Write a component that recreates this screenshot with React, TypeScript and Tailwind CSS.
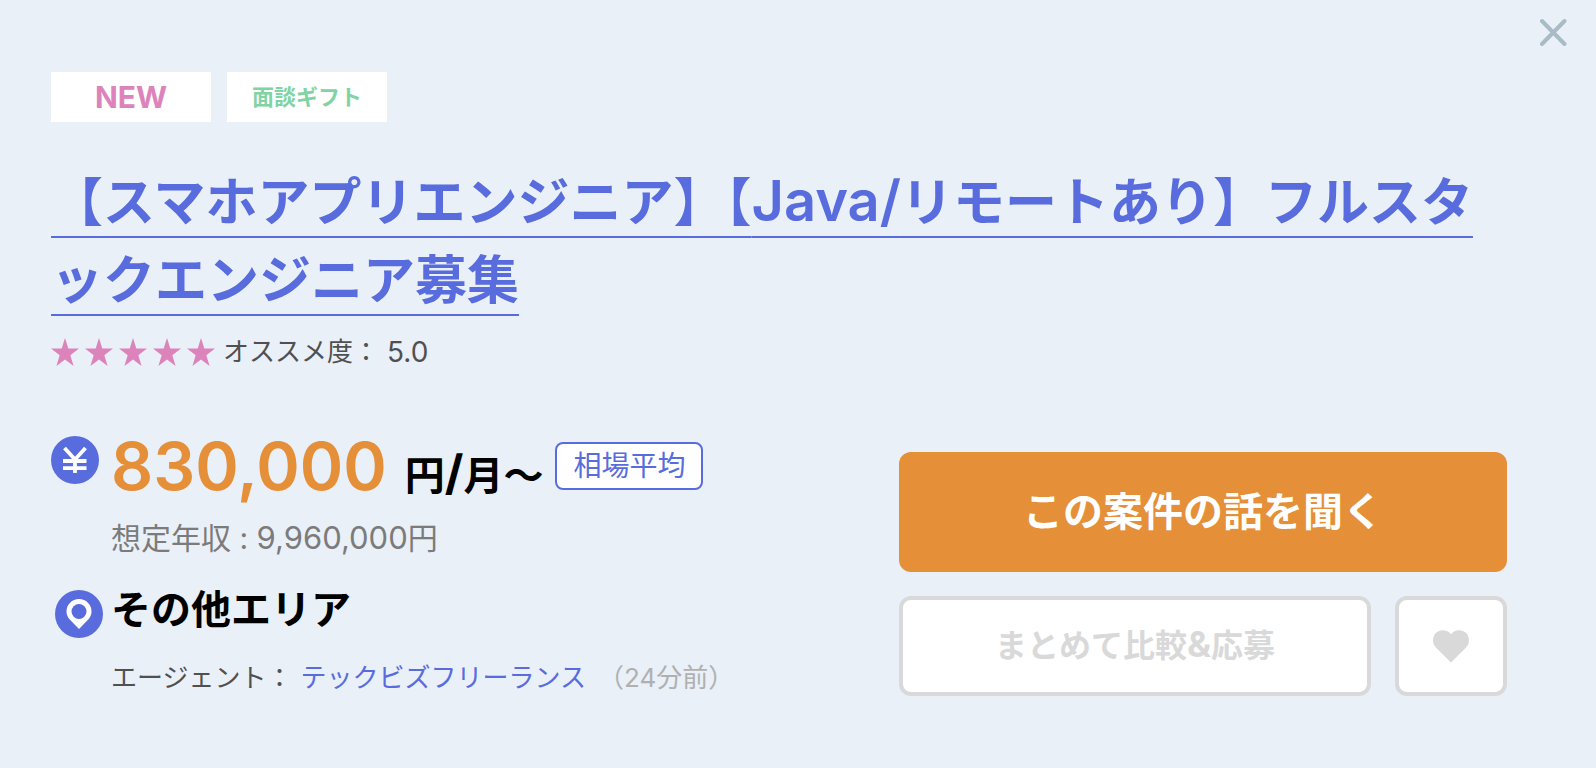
import type { ReactNode } from "react";

const job = {
  rating: "5.0",
  price: "830,000",
  yearly: "9,960,000",
  area: "その他エリア",
  agent: "テックビズフリーランス",
  updated: "（24分前）",
};

const tags = [
  { label: "NEW", className: "text-[30px] font-bold text-[#dd83bb]" },
  { label: "面談ギフト", className: "text-[22px] font-bold text-[#80d3a3]" },
];

// Latin runs are set a little larger than the kana around them
function Latin({ size, children }: { size: string; children: ReactNode }) {
  return <span className={`leading-none ${size}`}>{children}</span>;
}

function CloseIcon() {
  return (
    <svg width="28" height="28" viewBox="0 0 28 28" fill="none" stroke="#a9bbc5" strokeWidth="4" strokeLinecap="round">
      <path d="M3 3l22.500 23M25.500 3L3 26" />
    </svg>
  );
}

function YenIcon() {
  return (
    <svg className="shrink-0" width="48" height="48" viewBox="0 0 48 48">
      <circle cx="24" cy="24" r="24" fill="#586cde" />
      <path d="M13.500 12L24 23.500 34.500 12M24 23v14M12 25h23.500M12 32.200h23.500" fill="none" stroke="#fff" strokeWidth="3.800" />
    </svg>
  );
}

function PinIcon() {
  return (
    <svg className="shrink-0" width="48" height="48" viewBox="0 0 48 48">
      <circle cx="24" cy="24" r="24" fill="#586cde" />
      <path
        d="M24 9C17 9 11.500 14.500 11.500 21.500c0 3.500 1.300 6 3.500 8.300L24 39l9-9.200c2.200-2.300 3.500-4.800 3.500-8.300C36.500 14.500 31 9 24 9z"
        fill="#fff"
      />
      <circle cx="24" cy="21.500" r="7.500" fill="#586cde" />
    </svg>
  );
}

function HeartIcon() {
  return (
    <svg width="36" height="33" viewBox="0 0 36 33" fill="#d9d9d9">
      <path d="M18 32.500L3.200 17.800C1 15.600 0 13.200 0 10.300 0 4.600 4.400.3 9.800.3c3.300 0 6.300 1.500 8.200 4 1.900-2.500 4.900-4 8.200-4 5.400 0 9.800 4.300 9.800 10 0 2.900-1 5.300-3.200 7.500z" />
    </svg>
  );
}

function Rating() {
  return (
    <div className="mt-3 flex items-center text-[26px] leading-10 text-[#505050]">
      <div className="mr-2 flex gap-[6px]">
        {[1, 2, 3, 4, 5].map((n) => (
          <svg key={n} width="28" height="28" viewBox="0 0 28 28" fill="#dd83bb">
            <path d="M14 0l3.300 10.600H28l-8.700 6.600L22.600 28 14 21.400 5.400 28l3.300-10.800L0 10.600h10.700z" />
          </svg>
        ))}
      </div>
      <span>オススメ度：</span>
      <span className="ml-2 text-[28px]">{job.rating}</span>
    </div>
  );
}

export default function App() {
  return (
    <main
      lang="ja"
      className="min-h-screen bg-[#e9f0f8] pb-[68px] font-['Inter','Noto_Sans_CJK_JP',sans-serif]"
    >
      <header className="flex h-[72px] items-start justify-end pt-[18px] pr-[29px]">
        <button type="button" aria-label="閉じる">
          <CloseIcon />
        </button>
      </header>

      <div className="pr-[89px] pl-[51px]">
        {/* Tags */}
        <div className="flex gap-4">
          {tags.map((tag) => (
            <span
              key={tag.label}
              className={`flex h-[50px] w-40 items-center justify-center bg-white ${tag.className}`}
            >
              {tag.label}
            </span>
          ))}
        </div>

        <h1 className="mt-[42px] text-[52px] leading-[78px] font-semibold break-all text-[#586cde]">
          <a href="#" className="underline decoration-2 underline-offset-[15px] [text-decoration-skip-ink:none]">
            【スマホアプリエンジニア】【<Latin size="text-[56px]">Java/</Latin>リモートあり】フルスタ
            <wbr />
            ックエンジニア募集
          </a>
        </h1>

        <Rating />

        <div className="mt-16 flex items-start justify-between">
          {/* Price and area */}
          <section>
            <div className="flex gap-3">
              <YenIcon />
              <div>
                <div className="flex items-baseline">
                  <span className="text-[66px] leading-[60px] font-semibold text-[#e58f38]">{job.price}</span>
                  <span className="ml-[18px] text-[40px] leading-none font-bold">
                    円<Latin size="text-[48px]">/</Latin>月〜
                  </span>
                  <span className="mt-[6px] ml-3 self-start rounded-lg border-2 border-[#586cde] bg-white px-4 text-[28px] leading-[44px] text-[#586cde]">
                    相場平均
                  </span>
                </div>
                <p className="mt-4 text-[30px] leading-[50px] text-[#7b7b7b]">
                  想定年収 : <Latin size="text-[31px]">{job.yearly}</Latin>円
                </p>
              </div>
            </div>
            <div className="mt-[27px] flex gap-2 pl-1">
              <PinIcon />
              <div>
                <p className="text-[40px] leading-10 font-bold">{job.area}</p>
                <p className="mt-7 text-[26px] leading-10 text-[#505050]">
                  エージェント：
                  <a href="#" className="ml-2 text-[#586cde]">
                    {job.agent}
                  </a>
                  <span className="ml-3 text-[#b0b0b0]">{job.updated}</span>
                </p>
              </div>
            </div>
          </section>

          {/* Actions */}
          <section className="mt-4 w-[608px]">
            <button type="button" className="h-[120px] w-full rounded-xl bg-[#e58f38] text-[40px] font-bold text-white">
              この案件の話を聞く
            </button>
            <div className="mt-6 flex gap-6">
              <button
                type="button"
                className="h-[100px] flex-1 rounded-xl border-4 border-[#d9d9d9] bg-white text-[32px] font-bold text-[#d9d9d9]"
              >
                まとめて比較<Latin size="text-[36px]">&amp;</Latin>応募
              </button>
              <button
                type="button"
                aria-label="お気に入り"
                className="flex h-[100px] w-28 items-center justify-center rounded-xl border-4 border-[#d9d9d9] bg-white"
              >
                <HeartIcon />
              </button>
            </div>
          </section>
        </div>
      </div>
    </main>
  );
}
